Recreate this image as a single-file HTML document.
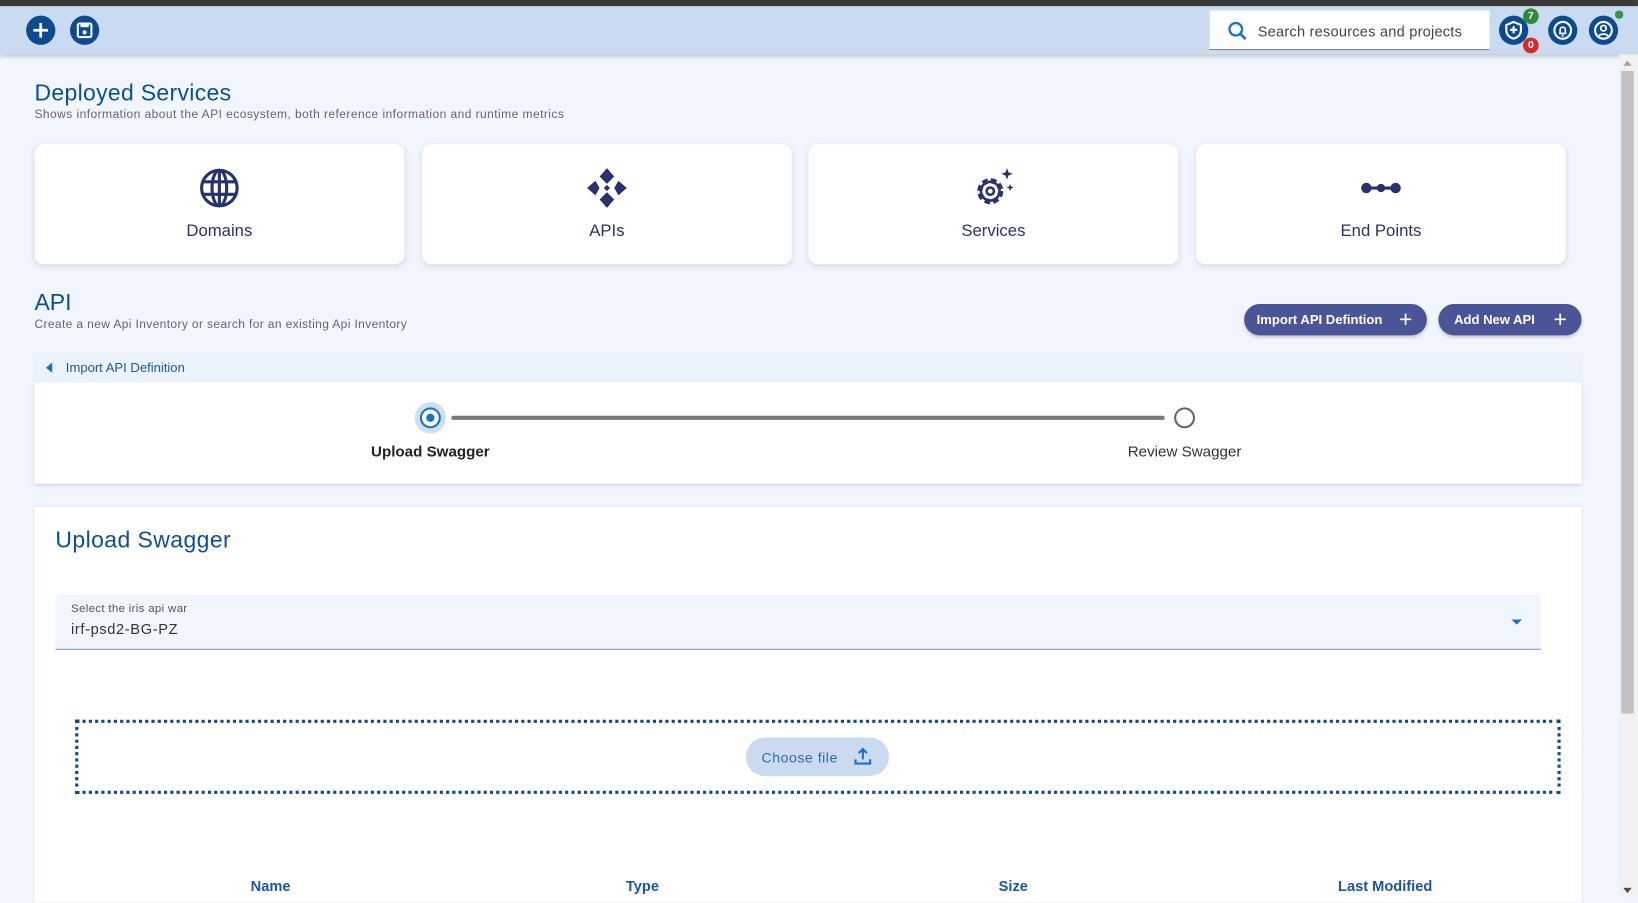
<!DOCTYPE html>
<html><head><meta charset="utf-8">
<style>
*{box-sizing:border-box;margin:0;padding:0}
html,body{width:1638px;height:896px;overflow:hidden;background:#f1f6fd;font-family:"Liberation Sans",sans-serif}
#w{position:absolute;left:0;top:0;width:1568px;height:858px;transform:scale(1.0446);transform-origin:0 0;background:#f1f6fd}
.a{position:absolute}
.hc{position:absolute;width:28px;height:28px;border-radius:50%;background:#0d4b91}
.card{position:absolute;top:138px;width:354px;height:115px;background:#fff;border-radius:9px;box-shadow:0 2px 6px rgba(0,0,0,.12)}
.card .l{position:absolute;top:75px;width:100%;text-align:center;font-size:16px;color:#27326f}
.card svg{position:absolute;left:157px;top:22px}
.btn{position:absolute;top:291px;height:30px;border-radius:15px;background:#4a5597;color:#fff;font-size:12.5px;font-weight:bold;line-height:30px;padding-left:12px;box-shadow:0 2px 3px rgba(0,0,0,.2)}
.btn b{position:absolute;right:14px;top:0;font-size:22px;font-weight:normal}
.th{position:absolute;top:840px;font-size:14px;font-weight:bold;color:#1b56a0;transform:translateX(-50%)}
</style></head><body><div id="w">
<div class="a" style="left:0;top:0;width:1568px;height:6px;background:#3a3a3a"></div>
<div class="a" style="left:0;top:6px;width:1568px;height:46px;background:#c9daf1;box-shadow:0 2px 4px rgba(0,0,0,.2)"></div>
<div class="hc" style="left:25px;top:15px"><svg width="28" height="28"><path d="M14 7v14M7 14h14" stroke="#fff" stroke-width="2.6"/></svg></div>
<div class="hc" style="left:67px;top:15px"><svg width="28" height="28"><rect x="7.5" y="7.5" width="13" height="13" rx="1.5" fill="none" stroke="#fff" stroke-width="2"/><rect x="10" y="8" width="8" height="3" fill="#fff"/><circle cx="14" cy="16" r="2" fill="#fff"/></svg></div>
<div class="a" style="left:1158px;top:10px;width:268px;height:38px;background:#fff;border-bottom:1px solid #777"></div>
<svg class="a" style="left:1174px;top:19px" width="22" height="22"><circle cx="9" cy="9" r="6" fill="none" stroke="#1a73c8" stroke-width="2.2"/><path d="M13.5 13.5l5 5" stroke="#1a73c8" stroke-width="2.4"/></svg>
<div class="a" style="left:1204px;top:22px;font-size:14px;color:#444;letter-spacing:.2px">Search resources and projects</div>
<div class="hc" style="left:1435px;top:15px"><svg width="28" height="28"><path d="M14 6l7 3v5c0 4-3 7-7 8-4-1-7-4-7-8V9z" fill="none" stroke="#fff" stroke-width="2"/><path d="M14 10v7M10.5 13.5h7" stroke="#fff" stroke-width="2"/></svg></div>
<div class="a" style="left:1458px;top:8px;width:15px;height:15px;border-radius:50%;background:#2e8b3a;color:#fff;font-size:10px;font-weight:bold;text-align:center;line-height:15px">7</div>
<div class="a" style="left:1458px;top:36px;width:15px;height:15px;border-radius:50%;background:#d32a2a;color:#fff;font-size:10px;font-weight:bold;text-align:center;line-height:15px">0</div>
<div class="hc" style="left:1482px;top:15px"><svg width="28" height="28"><circle cx="14" cy="14" r="8" fill="none" stroke="#fff" stroke-width="2"/><path d="M10.5 17h7M11.5 17v-3.5a2.5 2.5 0 015 0V17M13 19h2" fill="none" stroke="#fff" stroke-width="1.6"/></svg></div>
<div class="hc" style="left:1521px;top:15px"><svg width="28" height="28"><circle cx="14" cy="14" r="8" fill="none" stroke="#fff" stroke-width="2"/><circle cx="14" cy="12" r="2.6" fill="none" stroke="#fff" stroke-width="1.7"/><path d="M9.5 19.5c1.5-2.5 7.5-2.5 9 0" fill="none" stroke="#fff" stroke-width="1.7"/></svg></div>
<div class="a" style="left:1546px;top:10px;width:8px;height:8px;border-radius:50%;background:#2e9a3a"></div>
<div class="a" style="left:1550px;top:52px;width:18px;height:806px;background:#f1f1f1"></div>
<div class="a" style="left:1552px;top:68px;width:12px;height:615px;background:#c1c1c1"></div>
<div class="a" style="left:1554px;top:58px;width:0;height:0;border-left:4px solid transparent;border-right:4px solid transparent;border-bottom:5px solid #a0a0a0"></div>
<div class="a" style="left:1554px;top:850px;width:0;height:0;border-left:4px solid transparent;border-right:4px solid transparent;border-top:5px solid #505050"></div>

<div class="a" style="left:33px;top:76px;font-size:22px;color:#0c4f97;letter-spacing:.3px">Deployed Services</div>
<div class="a" style="left:33px;top:104px;font-size:11.5px;color:#666;letter-spacing:.42px">Shows information about the API ecosystem, both reference information and runtime metrics</div>

<div class="card" style="left:33px"><svg width="40" height="40"><circle cx="20" cy="20" r="17" fill="none" stroke="#27326f" stroke-width="3"/><ellipse cx="20" cy="20" rx="7" ry="17" fill="none" stroke="#27326f" stroke-width="3"/><path d="M3 14h34M3 26h34M20 3v34" stroke="#27326f" stroke-width="3"/></svg><div class="l">Domains</div></div>
<div class="card" style="left:404px"><svg width="40" height="40"><path d="M20 1l7 8-7 7-7-7zM20 39l7-8-7-7-7 7zM1 20l8-7 4 7-4 7zM39 20l-8-7-4 7 4 7z" fill="#27326f"/><path d="M20 17l3 3-3 3-3-3z" fill="#27326f"/></svg><div class="l">APIs</div></div>
<div class="card" style="left:774px"><svg width="40" height="40"><g transform="translate(17,23)"><circle r="10" fill="none" stroke="#27326f" stroke-width="5" stroke-dasharray="5 2.9"/><circle r="9" fill="none" stroke="#27326f" stroke-width="2.5"/><circle r="3.5" fill="none" stroke="#27326f" stroke-width="2.5"/></g><path d="M33 1l1.5 4 4 1.5-4 1.5-1.5 4-1.5-4-4-1.5 4-1.5zM36 16l1 2.5 2.5 1-2.5 1-1 2.5-1-2.5-2.5-1 2.5-1z" fill="#27326f"/></svg><div class="l">Services</div></div>
<div class="card" style="left:1145px"><svg width="40" height="40"><circle cx="6" cy="20" r="5" fill="#27326f"/><circle cx="20" cy="20" r="4" fill="#27326f"/><circle cx="34" cy="20" r="5" fill="#27326f"/><path d="M6 20h28" stroke="#27326f" stroke-width="3"/></svg><div class="l">End Points</div></div>

<div class="a" style="left:33px;top:277px;font-size:22px;color:#0c4f97">API</div>
<div class="a" style="left:33px;top:305px;font-size:11.5px;color:#666;letter-spacing:.35px">Create a new Api Inventory or search for an existing Api Inventory</div>
<div class="btn" style="left:1191px;width:175px">Import API Defintion<b>+</b></div>
<div class="btn" style="left:1377px;width:137px;padding-left:15px">Add New API<b>+</b></div>

<div class="a" style="left:33px;top:338px;width:1481px;height:28px;background:#edf3fc;box-shadow:0 1px 3px rgba(0,0,0,.08)"></div>
<div class="a" style="left:44px;top:347px;width:0;height:0;border-top:5px solid transparent;border-bottom:5px solid transparent;border-right:6px solid #1a6fc6"></div>
<div class="a" style="left:63px;top:345px;font-size:12.5px;color:#1b5aa5">Import API Definition</div>
<div class="a" style="left:33px;top:366px;width:1481px;height:97px;background:#fff;box-shadow:0 2px 4px rgba(0,0,0,.15)"></div>
<div class="a" style="left:432px;top:398px;width:683px;height:4px;border-radius:2px;background:#777"></div>
<div class="a" style="left:397px;top:385px;width:30px;height:30px;border-radius:50%;background:#cfe0f6"></div>
<div class="a" style="left:402px;top:390px;width:20px;height:20px;border-radius:50%;border:2px solid #1a73c8;background:#fff"></div>
<div class="a" style="left:408px;top:396px;width:8px;height:8px;border-radius:50%;background:#1a73c8"></div>
<div class="a" style="left:1124px;top:390px;width:20px;height:20px;border-radius:50%;border:2px solid #666;background:#fff"></div>
<div class="a" style="left:312px;top:425px;width:200px;text-align:center;font-size:14.5px;font-weight:bold;color:#222">Upload Swagger</div>
<div class="a" style="left:1034px;top:425px;width:200px;text-align:center;font-size:14.5px;color:#333">Review Swagger</div>

<div class="a" style="left:33px;top:484px;width:1481px;height:380px;background:#fff;border-top:1px solid #dde6f2;box-shadow:0 1px 3px rgba(0,0,0,.1)"></div>
<div class="a" style="left:53px;top:504px;font-size:22px;color:#0c4f97;letter-spacing:.4px">Upload Swagger</div>
<div class="a" style="left:53px;top:569px;width:1422px;height:53px;background:#f1f6fd;border-radius:4px 4px 0 0;border-bottom:1.5px solid #2f7bd0"></div>
<div class="a" style="left:68px;top:577px;font-size:11px;color:#555;letter-spacing:.3px">Select the iris api war</div>
<div class="a" style="left:68px;top:594px;font-size:14px;color:#333;letter-spacing:.6px">irf-psd2-BG-PZ</div>
<div class="a" style="left:1447px;top:593px;width:0;height:0;border-left:5px solid transparent;border-right:5px solid transparent;border-top:5px solid #1a6fc6"></div>
<div class="a" style="left:72px;top:689px;width:1422px;height:71px;border:3px dotted #0d4b91"></div>
<div class="a" style="left:714px;top:706px;width:137px;height:37px;border-radius:19px;background:#c9daf1"></div>
<div class="a" style="left:729px;top:718px;font-size:13.5px;color:#2f69a8;letter-spacing:.5px">Choose file</div>
<svg class="a" style="left:817px;top:715px" width="18" height="18"><path d="M9 2v10M5 6l4-4 4 4M2 12v4h14v-4" fill="none" stroke="#1a6fc6" stroke-width="2"/></svg>
<div class="th" style="left:259px">Name</div>
<div class="th" style="left:615px">Type</div>
<div class="th" style="left:970px">Size</div>
<div class="th" style="left:1326px">Last Modified</div>
</div></body></html>
